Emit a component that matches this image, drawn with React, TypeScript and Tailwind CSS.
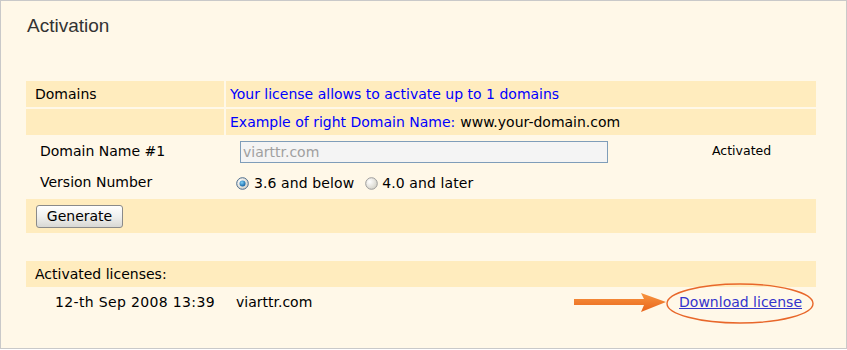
import React from 'react';

const font = { fontFamily: '"DejaVu Sans", Verdana, sans-serif' };

function Radio({ checked }: { checked?: boolean }) {
  return (
    <svg width="13" height="13" viewBox="0 0 13 13" className="shrink-0">
      <defs>
        <radialGradient id={checked ? 'rg1' : 'rg0'} cx="0.35" cy="0.35" r="0.7">
          <stop offset="0" stopColor="#ffffff" />
          <stop offset="1" stopColor="#d4d2c8" />
        </radialGradient>
        <radialGradient id="dot" cx="0.4" cy="0.35" r="0.7">
          <stop offset="0" stopColor="#7fd0f8" />
          <stop offset="1" stopColor="#0b5c9e" />
        </radialGradient>
      </defs>
      <circle
        cx="6.5"
        cy="6.5"
        r="5.8"
        fill={`url(#${checked ? 'rg1' : 'rg0'})`}
        stroke={checked ? '#4a6a8c' : '#9c9c9c'}
        strokeWidth="1"
      />
      {checked && <circle cx="6.5" cy="6.5" r="3" fill="url(#dot)" />}
    </svg>
  );
}

export default function App() {
  return (
    <div
      className="w-[847px] h-[349px] bg-[#fff8e8] border border-[#c9c9c9] pl-[25px] pr-[30px] pt-[13px] text-[14px] text-black"
      style={font}
    >
      <h1
        className="text-[19px] leading-[24px] text-[#333333] pl-[1px]"
        style={{ fontFamily: '"Liberation Sans", Arial, sans-serif' }}
      >
        Activation
      </h1>

      <div className="mt-[43px] flex flex-col gap-[2px]">
        <div className="grid grid-cols-[198px_1fr] gap-x-[2px] h-[26px]">
          <div className="bg-[#ffecbe] flex items-center pl-[9px]">Domains</div>
          <div className="bg-[#ffecbe] flex items-center pl-[4px] text-[#0000ff]">
            Your license allows to activate up to 1 domains
          </div>
        </div>

        <div className="grid grid-cols-[198px_1fr] gap-x-[2px] h-[26px]">
          <div className="bg-[#ffecbe]" />
          <div className="bg-[#ffecbe] flex items-center pl-[4px]">
            <span className="text-[#0000ff]">Example of right Domain Name:</span>
            <span className="ml-[5px]">www.your-domain.com</span>
          </div>
        </div>

        <div className="grid grid-cols-[198px_1fr_104px] gap-x-[2px] h-[29px] items-center">
          <div className="pl-[14px]">Domain Name #1</div>
          <div className="pl-[14px]">
            <input
              disabled
              value="viarttr.com"
              readOnly
              className="w-[368px] h-[22px] border border-[#7f9db9] bg-[#f4f4f4] text-[#a0a0a0] px-[2px] text-[14px] outline-none"
              style={font}
            />
          </div>
          <div className="text-[12.5px]">Activated</div>
        </div>

        <div className="grid grid-cols-[198px_1fr] gap-x-[2px] h-[29px] items-center">
          <div className="pl-[14px]">Version Number</div>
          <div className="flex items-center pl-[10px] pt-[2px] tracking-[0.1px]">
            <Radio checked />
            <span className="ml-[5px]">3.6 and below</span>
            <span className="ml-[11px]">
              <Radio />
            </span>
            <span className="ml-[4px]">4.0 and later</span>
          </div>
        </div>

        <div className="bg-[#ffecbe] h-[34px] flex items-center pl-[10px]">
          <button
            className="w-[87px] h-[23px] border border-[#8a8a8a] rounded-[3px] bg-gradient-to-b from-[#ffffff] via-[#f0f0ee] to-[#d8d8d4] text-[14px] text-black leading-none"
            style={font}
          >
            Generate
          </button>
        </div>

        <div className="mt-[26px] bg-[#ffecbe] h-[26px] flex items-center pl-[9px]">
          Activated licenses:
        </div>

        <div className="relative grid grid-cols-[200px_1fr_auto] h-[30px] items-center -mt-[2px]">
          <div className="pl-[29px] tracking-[0.35px]">12-th Sep 2008 13:39</div>
          <div className="pl-[10px]">viarttr.com</div>
          <a href="#" className="text-[#3333cc] underline pr-[14px]">
            Download license
          </a>

          <svg
            className="absolute left-[548px] top-[5px] pointer-events-none"
            width="94"
            height="22"
            viewBox="0 0 94 22"
          >
            <defs>
              <linearGradient id="arr" x1="0" y1="0" x2="0" y2="1">
                <stop offset="0" stopColor="#f8953f" />
                <stop offset="1" stopColor="#e8651c" />
              </linearGradient>
            </defs>
            <path
              d="M0 7 L70 7 L67 1 L92 10 L67 20 L70 13 L0 13 Z"
              fill="url(#arr)"
            />
          </svg>

          <svg
            className="absolute left-[640px] top-[-4px] pointer-events-none"
            width="150"
            height="42"
            viewBox="0 0 150 42"
          >
            <ellipse cx="74" cy="20.5" rx="73" ry="19.5" fill="none" stroke="#e8672a" strokeWidth="1.4" />
          </svg>
        </div>
      </div>
    </div>
  );
}
